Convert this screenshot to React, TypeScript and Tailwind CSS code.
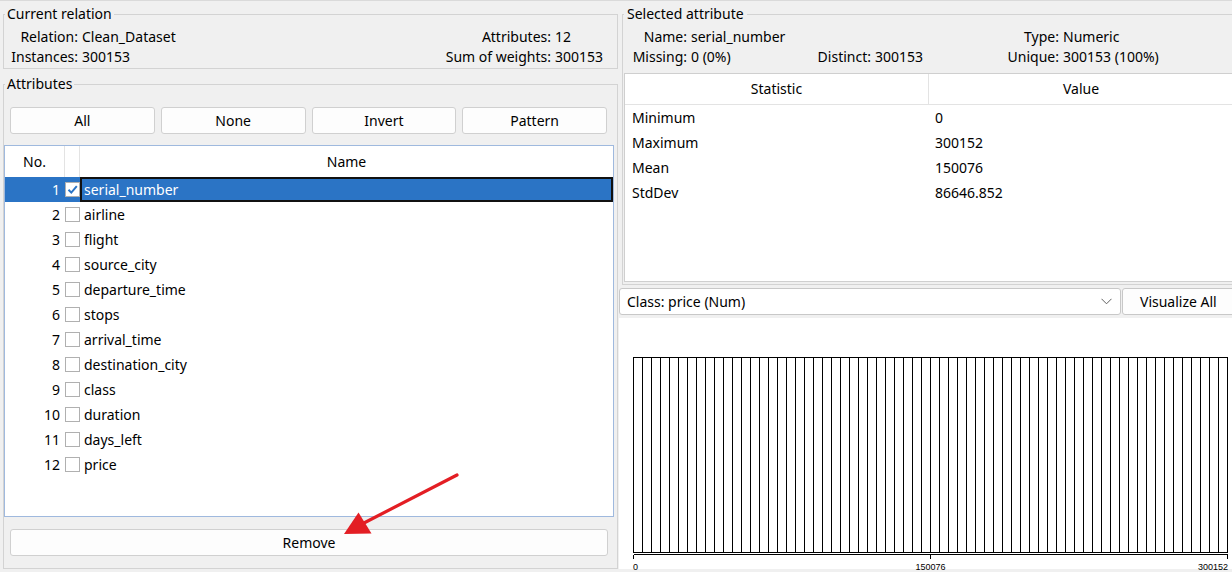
import React from "react";

const attributes = [
  "serial_number",
  "airline",
  "flight",
  "source_city",
  "departure_time",
  "stops",
  "arrival_time",
  "destination_city",
  "class",
  "duration",
  "days_left",
  "price",
];

const stats = [
  ["Minimum", "0"],
  ["Maximum", "300152"],
  ["Mean", "150076"],
  ["StdDev", "86646.852"],
];

function CheckBox({ checked }: { checked?: boolean }) {
  return (
    <div className="h-[15px] w-[15px] border border-[#b0b0b0] bg-white">
      {checked && (
        <svg width="13" height="13" viewBox="0 0 13 13">
          <path d="M2.5 6.8 L5.3 9.6 L10.8 3.2" fill="none" stroke="#2b74c5" strokeWidth="2" />
        </svg>
      )}
    </div>
  );
}

function Histogram() {
  const bars = Array.from({ length: 66 }, (_, i) => 14.5 + i * 9);
  return (
    <svg width="613" height="251" className="overflow-visible" shapeRendering="crispEdges">
      {bars.map((x) => (
        <rect key={x} x={x} y={39.5} width={9} height={195} fill="white" stroke="black" strokeWidth={1} />
      ))}
      <line x1={14.5} y1={236.5} x2={608.5} y2={236.5} stroke="black" />
      <line x1={14.5} y1={236.5} x2={14.5} y2={241} stroke="black" />
      <line x1={311.5} y1={236.5} x2={311.5} y2={241} stroke="black" />
      <line x1={608.5} y1={236.5} x2={608.5} y2={241} stroke="black" />
      <g fontFamily="Liberation Sans, Arial, sans-serif" fontSize="9" fill="black" shapeRendering="auto">
        <text x={14} y={252}>0</text>
        <text x={311.5} y={252} textAnchor="middle">150076</text>
        <text x={609} y={252} textAnchor="end">300152</text>
      </g>
    </svg>
  );
}

export default function App() {
  return (
    <div className="relative flex h-[572px] w-[1232px] overflow-hidden border-t border-[#dadada] bg-[#f0f0f0] font-['Noto_Sans',sans-serif] text-[14px] leading-[20px] text-black">
      {/* Left column */}
      <div className="flex w-[619px] shrink-0 flex-col pl-[3px] pr-[1px] pt-[4px]">
        <fieldset className="border border-[#d3d3d3] pb-[1px] pt-[4px]">
          <legend className="ml-[1px] px-[2px] leading-[18px]">Current relation</legend>
          <div className="grid grid-cols-[74px_1fr_auto_66px]">
            <span className="text-right">Relation:</span>
            <span className="pl-[4px]">Clean_Dataset</span>
            <span className="text-right">Attributes:</span>
            <span className="pl-[4px]">12</span>
            <span className="text-right">Instances:</span>
            <span className="pl-[4px]">300153</span>
            <span className="text-right">Sum of weights:</span>
            <span className="pl-[4px]">300153</span>
          </div>
        </fieldset>

        <fieldset className="mt-[6px] border border-[#d3d3d3] pb-[12px] pt-[14px]">
          <legend className="ml-[1px] px-[2px] leading-[18px]">Attributes</legend>
          <div className="ml-[6px] mr-[10px] grid grid-cols-4 gap-[6px]">
            {["All", "None", "Invert", "Pattern"].map((b) => (
              <button
                key={b}
                className="flex h-[27px] items-center justify-center rounded-[3px] border border-[#d0d0d0] bg-[#fdfdfd]"
              >
                {b}
              </button>
            ))}
          </div>

          <div className="mr-[3px] mt-[11px] flex h-[372px] flex-col border border-[#9fb9de] bg-white">
            <div className="flex h-[31px] shrink-0">
              <div className="flex w-[60px] items-center justify-center border-r border-[#e3e3e3]">No.</div>
              <div className="w-[15px] border-r border-[#e3e3e3]" />
              <div className="flex flex-1 items-center justify-center">Name</div>
            </div>
            {attributes.map((name, i) => {
              const selected = i === 0;
              return (
                <div
                  key={name}
                  className={
                    selected ? "flex h-[25px] shrink-0 items-center bg-[#2b74c5] text-white" : "flex h-[25px] shrink-0 items-center"
                  }
                >
                  <div className="w-[60px] pr-[5px] text-right">{i + 1}</div>
                  <div className="w-[15px]">
                    <CheckBox checked={selected} />
                  </div>
                  {selected ? (
                    <div className="flex h-full flex-1 items-center border-2 border-[#111] pl-[2px]">{name}</div>
                  ) : (
                    <div className="flex-1 pl-[4px]">{name}</div>
                  )}
                </div>
              );
            })}
          </div>

          <button className="ml-[6px] mt-[12px] flex h-[27px] w-[598px] items-center justify-center rounded-[3px] border border-[#d0d0d0] bg-[#fdfdfd]">
            Remove
          </button>
        </fieldset>
      </div>

      {/* Right column */}
      <div className="flex w-[613px] shrink-0 flex-col pt-[4px]">
        <fieldset className="ml-[3px] w-[640px] shrink-0 border border-[#d3d3d3] pb-[2px] pt-[4px]">
          <legend className="ml-[1px] px-[3px] leading-[18px]">Selected attribute</legend>
          <div className="grid grid-cols-[64px_128px_56px_132px_56px_1fr]">
            <span className="text-right">Name:</span>
            <span className="pl-[4px]">serial_number</span>
            <span />
            <span />
            <span className="text-right">Type:</span>
            <span className="pl-[4px]">Numeric</span>
            <span className="text-right">Missing:</span>
            <span className="pl-[4px]">0 (0%)</span>
            <span className="text-right">Distinct:</span>
            <span className="pl-[4px]">300153</span>
            <span className="text-right">Unique:</span>
            <span className="pl-[4px]">300153 (100%)</span>
          </div>

          <div className="ml-[1px] mt-[6px] h-[209px] border border-[#cfcfcf] bg-white">
            <div className="flex h-[31px] border-b border-[#e3e3e3]">
              <div className="flex w-[304px] items-center justify-center border-r border-[#e3e3e3]">Statistic</div>
              <div className="flex w-[304px] items-center justify-center">Value</div>
            </div>
            {stats.map(([k, v]) => (
              <div key={k} className="flex h-[25px] items-center">
                <div className="w-[304px] pl-[7px]">{k}</div>
                <div className="pl-[6px]">{v}</div>
              </div>
            ))}
          </div>
        </fieldset>

        <div className="mt-[3px] flex h-[27px] w-[640px] shrink-0 gap-[1px]">
          <div className="flex w-[502px] shrink-0 items-center justify-between rounded-[3px] border border-[#c8c8c8] bg-white pl-[7px] pr-[8px]">
            <span>Class: price (Num)</span>
            <svg width="11" height="7" viewBox="0 0 11 7">
              <path d="M0.5 0.8 L5.5 5.8 L10.5 0.8" fill="none" stroke="#606060" strokeWidth="1" />
            </svg>
          </div>
          <button className="flex w-[130px] shrink-0 items-center rounded-[3px] border border-[#c8c8c8] bg-[#fdfdfd] pl-[17px]">
            Visualize All
          </button>
        </div>

        <div className="mt-[3px] h-[251px] shrink-0 bg-white">
          <Histogram />
        </div>
      </div>

      {/* Red annotation arrow */}
      <svg className="pointer-events-none absolute left-0 top-0" width="1232" height="572">
        <line x1="457" y1="474" x2="362" y2="523" stroke="#e31e24" strokeWidth="3.2" strokeLinecap="round" />
        <polygon points="344,533 358.5,511.5 371.5,532.5" fill="#e31e24" />
      </svg>
    </div>
  );
}
